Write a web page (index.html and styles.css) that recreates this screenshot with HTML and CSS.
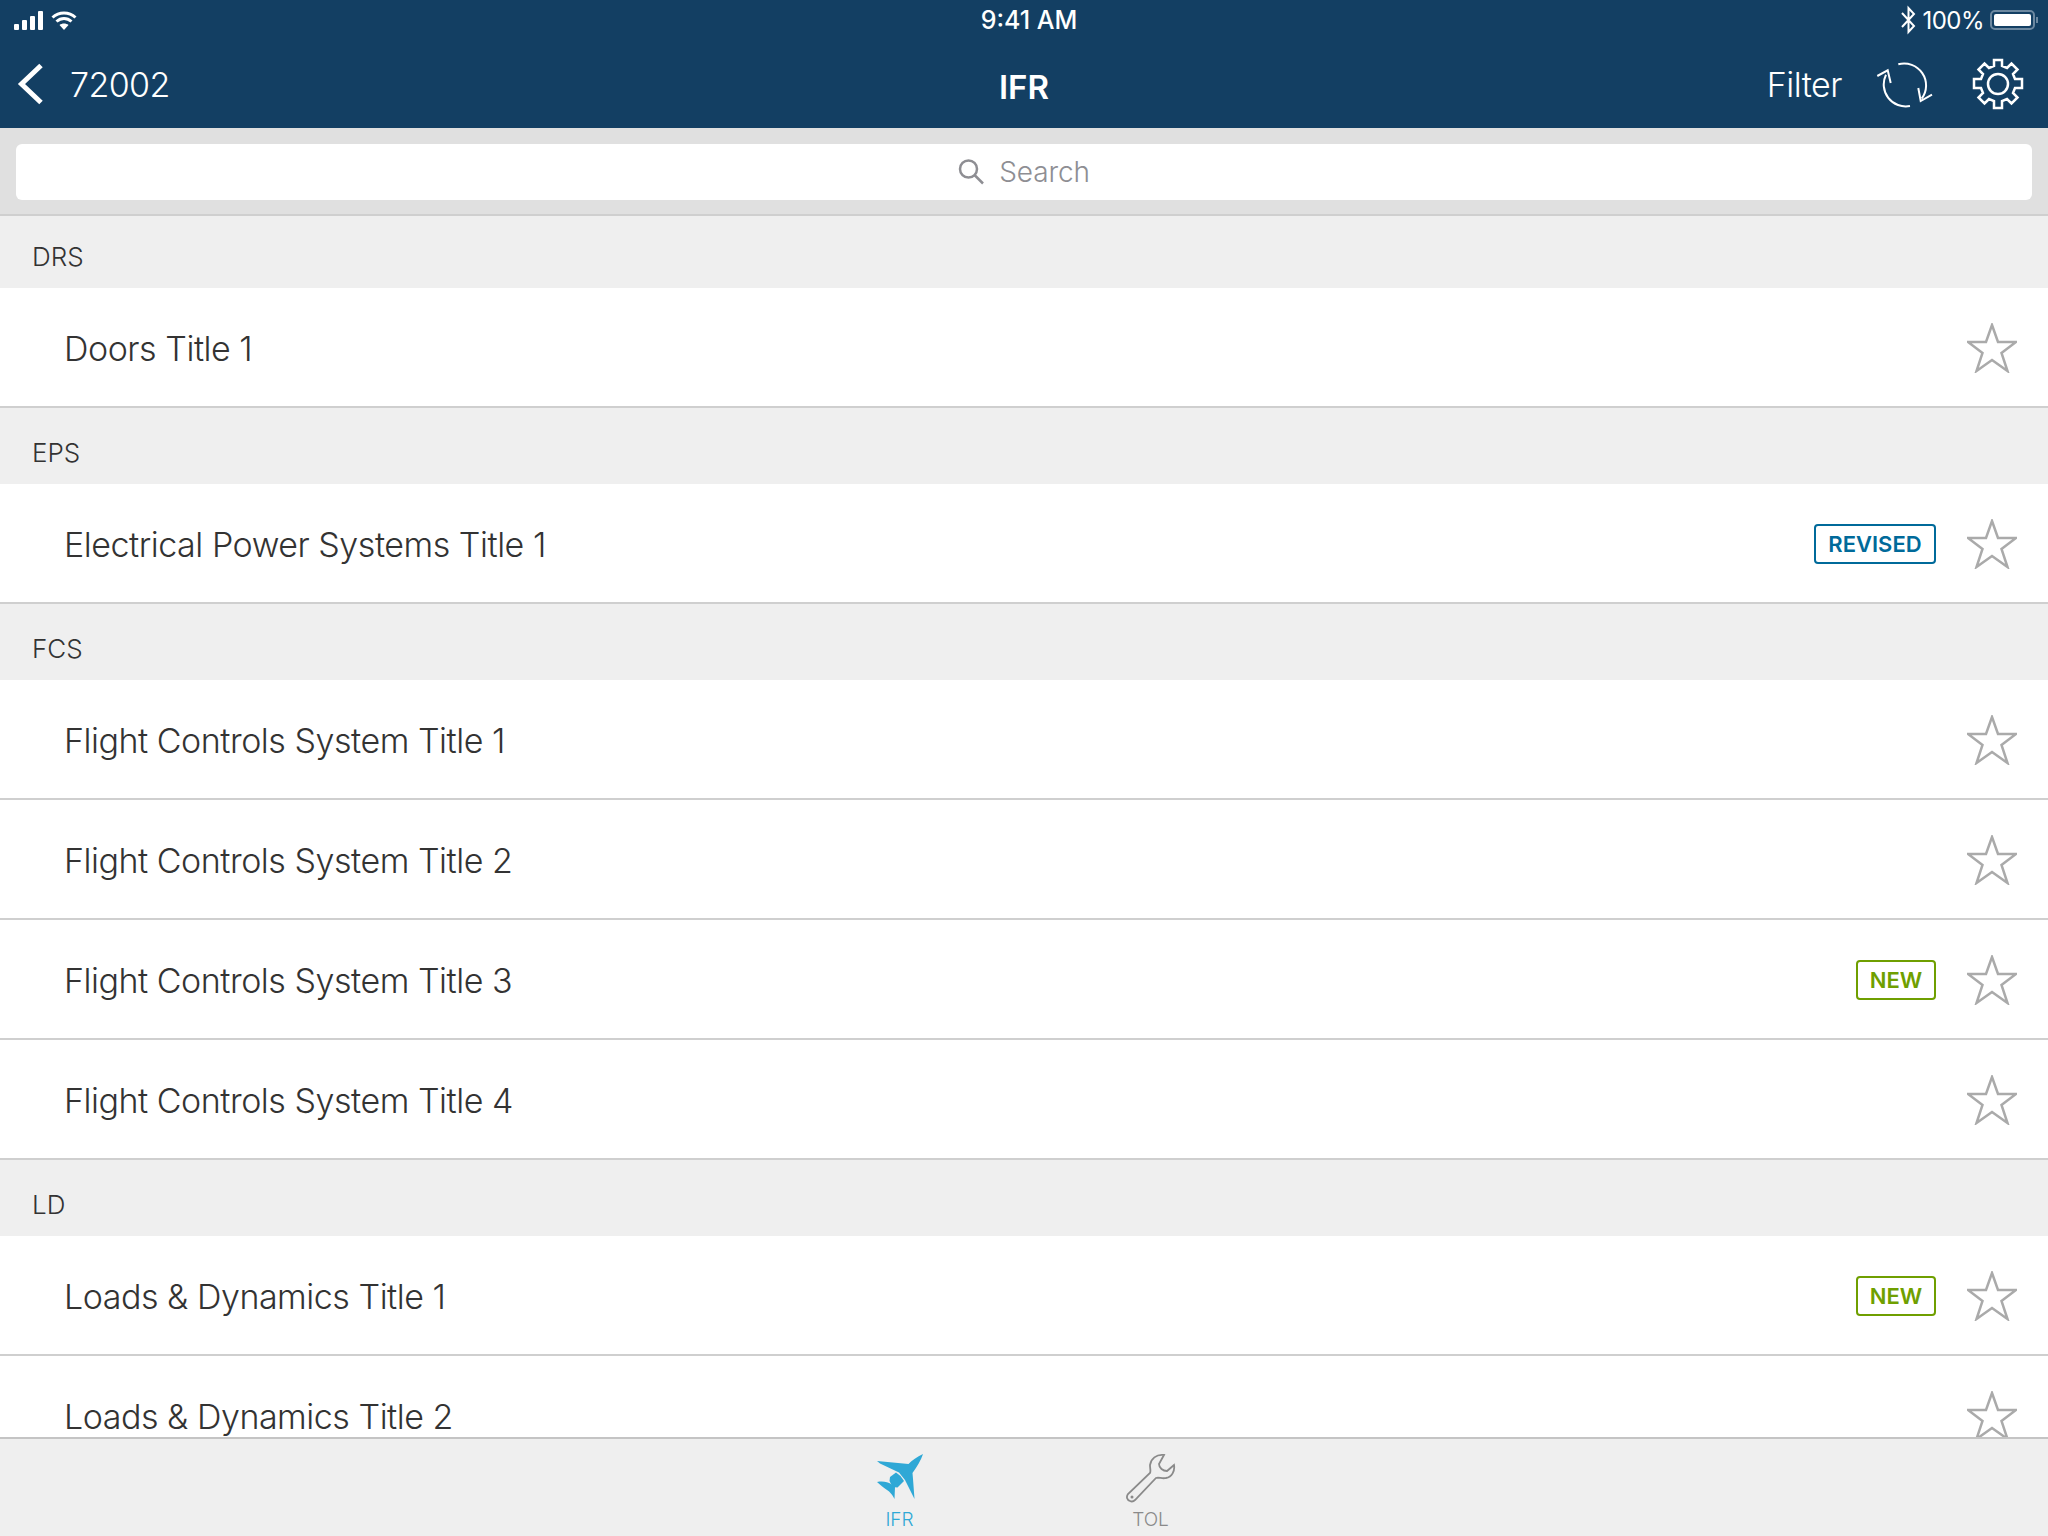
FILE: index.html
```html
<!DOCTYPE html>
<html lang="en">
<head>
    <meta charset="UTF-8">
    <meta name="viewport" content="width=device-width, initial-scale=1.0">
    <title>IFR</title>
    <link rel="stylesheet" href="styles.css">
</head>
<body>
    <div class="app">
        <header class="header">
            <div class="status-bar">
                <div class="status-left">
                    <svg class="icon-signal" width="29" height="19" viewBox="0 0 29 19"><rect x="0" y="13" width="5" height="6" rx="1"/><rect x="8" y="9" width="5" height="10" rx="1"/><rect x="16" y="5" width="5" height="14" rx="1"/><rect x="24" y="0" width="5" height="19" rx="1"/></svg>
                    <svg class="icon-wifi" width="26" height="19" viewBox="0 0 26 19"><path d="M1.500 6.500C8 .5 18 .5 24.500 6.500"/><path d="M5.500 10.500C10 6.500 16 6.500 20.500 10.500"/><path class="wifi-dot" d="M8.500 14C11 12 15 12 17.500 14L13 19Z"/></svg>
                </div>
                <div class="status-time">9:41 AM</div>
                <div class="status-right">
                    <svg class="icon-bt" width="15" height="32" viewBox="0 0 15 32"><path d="M1 9L13 22L7.500 28V4L13 10L1 23"/></svg>
                    <span>100%</span>
                    <div class="battery"><div class="battery-fill"></div></div>
                    <div class="battery-cap"></div>
                </div>
            </div>
            <nav class="nav-bar">
                <div class="nav-left">
                    <svg class="icon-back" width="28" height="42" viewBox="0 0 28 42"><path d="M25 2.500L5.500 21L25 39.500"/></svg>
                    <span class="nav-back-text">72002</span>
                </div>
                <div class="nav-title">IFR</div>
                <div class="nav-right">
                    <span class="nav-filter">Filter</span>
                    <svg class="icon-sync" width="60" height="48" viewBox="0 0 60 48"><path d="M23.300 4.300A22 22 0 0 1 46.700 38.700"/><path d="M43.300 28L45.700 41L57 34.700"/><path d="M35 46A22 22 0 0 1 11 14.700"/><path d="M2.300 16L12.700 10.300L15.700 23"/></svg>
                    <svg class="icon-gear" width="52" height="52" viewBox="0 0 52 52"><circle cx="26" cy="26" r="10"/><path d="M22 2h8v6l5 2 4.500-4.500 6 6L41 16l2 5h7v9h-7l-2 5 4.500 4.500-6 6L35 41l-5 2v7h-8v-7l-5-2-4.500 4.500-6-6L11 35l-2-5H2v-9h7l2-5-4.500-4.500 6-6L17 10l5-2z"/></svg>
                </div>
            </nav>
        </header>

        <div class="search-wrap">
            <div class="search-box">
                <svg class="icon-search" width="27" height="26" viewBox="0 0 27 26"><circle cx="10.500" cy="10" r="8.500"/><path d="M16.500 16L25 24.500"/></svg>
                <span>Search</span>
            </div>
        </div>

        <main class="list">
            <div class="section-head section-first">DRS</div>
            <div class="row">
                <span class="row-title">Doors Title 1</span>
                <svg class="star" width="50" height="50" viewBox="0 0 50 50"><path d="M25 2L31 19H49L34.500 30L40.500 48L25 37L9.500 48L15.500 30L1 19H19Z"/></svg>
            </div>

            <div class="section-head">EPS</div>
            <div class="row">
                <span class="row-title">Electrical Power Systems Title 1</span>
                <span class="badge badge-revised">REVISED</span>
                <svg class="star" width="50" height="50" viewBox="0 0 50 50"><path d="M25 2L31 19H49L34.500 30L40.500 48L25 37L9.500 48L15.500 30L1 19H19Z"/></svg>
            </div>

            <div class="section-head">FCS</div>
            <div class="row">
                <span class="row-title">Flight Controls System Title 1</span>
                <svg class="star" width="50" height="50" viewBox="0 0 50 50"><path d="M25 2L31 19H49L34.500 30L40.500 48L25 37L9.500 48L15.500 30L1 19H19Z"/></svg>
            </div>
            <div class="row">
                <span class="row-title">Flight Controls System Title 2</span>
                <svg class="star" width="50" height="50" viewBox="0 0 50 50"><path d="M25 2L31 19H49L34.500 30L40.500 48L25 37L9.500 48L15.500 30L1 19H19Z"/></svg>
            </div>
            <div class="row">
                <span class="row-title">Flight Controls System Title 3</span>
                <span class="badge badge-new">NEW</span>
                <svg class="star" width="50" height="50" viewBox="0 0 50 50"><path d="M25 2L31 19H49L34.500 30L40.500 48L25 37L9.500 48L15.500 30L1 19H19Z"/></svg>
            </div>
            <div class="row">
                <span class="row-title">Flight Controls System Title 4</span>
                <svg class="star" width="50" height="50" viewBox="0 0 50 50"><path d="M25 2L31 19H49L34.500 30L40.500 48L25 37L9.500 48L15.500 30L1 19H19Z"/></svg>
            </div>

            <div class="section-head">LD</div>
            <div class="row">
                <span class="row-title">Loads &amp; Dynamics Title 1</span>
                <span class="badge badge-new">NEW</span>
                <svg class="star" width="50" height="50" viewBox="0 0 50 50"><path d="M25 2L31 19H49L34.500 30L40.500 48L25 37L9.500 48L15.500 30L1 19H19Z"/></svg>
            </div>
            <div class="row">
                <span class="row-title">Loads &amp; Dynamics Title 2</span>
                <svg class="star" width="50" height="50" viewBox="0 0 50 50"><path d="M25 2L31 19H49L34.500 30L40.500 48L25 37L9.500 48L15.500 30L1 19H19Z"/></svg>
            </div>
        </main>

        <footer class="tab-bar">
            <div class="tab tab-active">
                <svg class="icon-plane" width="48" height="48" viewBox="0 0 48 48"><path d="M47 1C41 4 36 7 32.500 11L1 8L4 10.500L23 19.500L29 27L38.500 46L37 26L36.500 20C41 14 45 7 47 1Z"/><path d="M20 19.500L14 24L13.500 28L16.500 34L21.500 34.500L28 28L24.500 23Z"/><path d="M1 29C7 28 12 29 15 31L19 34L18.500 46C16 41 14 39 11 37C7 34 4 32 1 29Z"/></svg>
                <span>IFR</span>
            </div>
            <div class="tab">
                <svg class="icon-wrench" width="50" height="50" viewBox="0 0 50 50"><path d="M38 2C30 1 25 6 24 12C24 16 25 18 24 20L2 41C0 44 1 47 4 48C6 49 8 48 9 47L30 25C33 24 36 26 40 25C46 24 49 18 48 12L41 18C37 18 33 15 33 11Z"/><circle cx="6" cy="44" r="1.500" class="wrench-hole"/></svg>
                <span>TOL</span>
            </div>
        </footer>
    </div>
</body>
</html>
```

FILE: styles.css
```css
* {
    box-sizing: border-box;
}

body {
    margin: 0;
    font-family: Inter, "Liberation Sans", sans-serif;
    background-color: #ffffff;
}

svg {
    display: block;
    flex-shrink: 0;
}

.app {
    display: flex;
    flex-direction: column;
    height: 1536px;
    overflow: hidden;
}

/* Kopfbereich */
.header {
    background-color: #133f63;
    color: #ffffff;
    height: 128px;
}

.status-bar {
    display: grid;
    grid-template-columns: 1fr auto 1fr;
    align-items: center;
    height: 40px;
    padding: 0 10px 0 14px;
    font-size: 24px;
}

.status-left {
    display: flex;
    align-items: center;
    gap: 8px;
}

.status-time {
    margin-left: 6px;
    font-size: 25px;
    font-weight: 500;
}

.status-right {
    display: flex;
    align-items: center;
    justify-content: flex-end;
}

.status-right span {
    margin-left: 6px;
    letter-spacing: -0.5px;
}

.icon-signal {
    fill: #ffffff;
}

.icon-wifi path {
    fill: none;
    stroke: #ffffff;
    stroke-width: 3;
}

.icon-wifi .wifi-dot {
    fill: #ffffff;
    stroke: none;
}

.icon-bt path {
    fill: none;
    stroke: #ffffff;
    stroke-width: 2;
}

.battery {
    width: 45px;
    height: 20px;
    margin-left: 6px;
    padding: 2px;
    border: 2px solid #6c88a0;
    border-radius: 5px;
}

.battery-fill {
    height: 100%;
    background-color: #ffffff;
    border-radius: 2px;
}

.battery-cap {
    width: 2px;
    height: 6px;
    margin-left: 1px;
    background-color: #6c88a0;
}

.nav-bar {
    display: grid;
    grid-template-columns: 1fr auto 1fr;
    align-items: center;
    height: 88px;
    padding: 0 24px 0 16px;
}

.nav-left {
    display: flex;
    align-items: center;
}

.nav-back-text {
    margin-left: 26px;
    font-size: 34px;
    font-weight: 300;
    letter-spacing: -0.6px;
}

.nav-title {
    margin-left: 8px;
    padding-top: 5px;
    font-size: 33px;
    font-weight: 600;
}

.nav-right {
    display: flex;
    align-items: center;
    justify-content: flex-end;
}

.nav-filter {
    font-size: 34px;
    font-weight: 300;
    letter-spacing: -0.5px;
}

.icon-sync {
    margin-left: 33px;
}

.icon-sync path {
    fill: none;
    stroke: #ffffff;
    stroke-width: 2;
}

.icon-gear {
    margin-left: 37px;
}

.icon-gear circle,
.icon-gear path {
    fill: none;
    stroke: #ffffff;
    stroke-width: 2.500;
}

.icon-back path {
    fill: none;
    stroke: #ffffff;
    stroke-width: 5;
}

/* Suchfeld */
.search-wrap {
    height: 88px;
    padding: 16px;
    background-color: #e0e0e0;
    border-bottom: 2px solid #cfcfcf;
}

.search-box {
    display: flex;
    align-items: center;
    justify-content: center;
    gap: 14px;
    height: 56px;
    background-color: #ffffff;
    border-radius: 6px;
    color: #8e8e93;
    font-size: 28px;
    font-weight: 300;
    letter-spacing: -0.1px;
}

.icon-search circle,
.icon-search path {
    fill: none;
    stroke: #8e8e93;
    stroke-width: 2.500;
}

/* Liste */
.list {
    flex: 1;
    min-height: 0;
    overflow: hidden;
}

.section-head {
    display: flex;
    align-items: center;
    height: 76px;
    padding-left: 32px;
    padding-top: 13px;
    background-color: #efefef;
    color: #333333;
    font-size: 26px;
    font-weight: 300;
}

.section-first {
    height: 72px;
    padding-top: 9px;
}

.row {
    display: flex;
    align-items: center;
    height: 120px;
    padding: 0 31px 0 64px;
    background-color: #ffffff;
    border-bottom: 2px solid #cfcfcf;
}

.row-title {
    flex: 1;
    padding-top: 2px;
    color: #333333;
    font-size: 34px;
    font-weight: 300;
    letter-spacing: -0.47px;
}

.badge {
    display: flex;
    align-items: center;
    justify-content: center;
    height: 40px;
    margin-top: 2px;
    margin-right: 31px;
    border: 2px solid;
    border-radius: 4px;
    font-size: 22px;
    font-weight: 600;
}

.badge-revised {
    width: 122px;
    color: #006a9a;
    border-color: #006a9a;
}

.badge-new {
    width: 80px;
    color: #6f9f00;
    border-color: #6f9f00;
}

.star {
    margin-top: 2px;
}

.star path {
    fill: none;
    stroke: #aaaaaa;
    stroke-width: 2.500;
}

/* Tabs */
.tab-bar {
    display: flex;
    justify-content: center;
    flex-shrink: 0;
    height: 99px;
    padding-top: 14px;
    padding-left: 2px;
    background-color: #efefef;
    border-top: 2px solid #c4c4c4;
}

.tab {
    display: flex;
    flex-direction: column;
    align-items: center;
    width: 251px;
    color: #8a8a8a;
    font-size: 19px;
    font-weight: 300;
}

.tab span {
    margin-top: 5px;
}

.tab-active {
    color: #2fa8d6;
}

.icon-plane {
    margin-bottom: 2px;
}

.icon-plane path {
    fill: #2fa8d6;
}

.icon-wrench path {
    fill: none;
    stroke: #8a8a8a;
    stroke-width: 1.800;
}

.wrench-hole {
    fill: #8a8a8a;
}
```
